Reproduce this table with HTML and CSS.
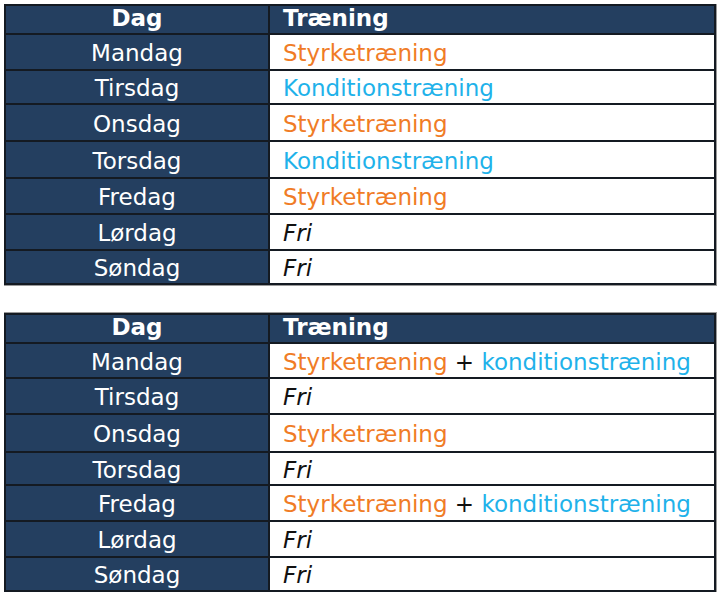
FILE: index.html
```html
<!DOCTYPE html>
<html lang="da">
<head>
<meta charset="utf-8">
<link rel="stylesheet" href="styles.css">
</head>
<body>
<table class="plan">
  <tr class="head"><th class="day">Dag</th><th class="act">Træning</th></tr>
  <tr class="r36"><td class="day">Mandag</td><td class="act"><span class="str">Styrketræning</span></td></tr>
  <tr class="r34"><td class="day">Tirsdag</td><td class="act"><span class="kon">Konditionstræning</span></td></tr>
  <tr class="r37"><td class="day">Onsdag</td><td class="act"><span class="str">Styrketræning</span></td></tr>
  <tr class="r37"><td class="day">Torsdag</td><td class="act"><span class="kon">Konditionstræning</span></td></tr>
  <tr class="r36"><td class="day">Fredag</td><td class="act"><span class="str">Styrketræning</span></td></tr>
  <tr class="r36"><td class="day">Lørdag</td><td class="act"><span class="fri">Fri</span></td></tr>
  <tr class="r34"><td class="day">Søndag</td><td class="act"><span class="fri">Fri</span></td></tr>
</table>

<table class="plan second">
  <tr class="head"><th class="day">Dag</th><th class="act">Træning</th></tr>
  <tr class="r35"><td class="day">Mandag</td><td class="act"><span class="str">Styrketræning</span> + <span class="kon">konditionstræning</span></td></tr>
  <tr class="r36"><td class="day">Tirsdag</td><td class="act"><span class="fri">Fri</span></td></tr>
  <tr class="r38"><td class="day">Onsdag</td><td class="act"><span class="str">Styrketræning</span></td></tr>
  <tr class="r33"><td class="day">Torsdag</td><td class="act"><span class="fri">Fri</span></td></tr>
  <tr class="r36"><td class="day">Fredag</td><td class="act"><span class="str">Styrketræning</span> + <span class="kon">konditionstræning</span></td></tr>
  <tr class="r36"><td class="day">Lørdag</td><td class="act"><span class="fri">Fri</span></td></tr>
  <tr class="r34"><td class="day">Søndag</td><td class="act"><span class="fri">Fri</span></td></tr>
</table>
</body>
</html>
```

FILE: styles.css
```css
html, body {
  background: #ffffff;
}
body {
  margin: 4px 0 0 4px;
  font-family: "DejaVu Sans", Verdana, sans-serif;
  font-size: 23px;
  color: #111111;
}
.plan {
  width: 712px;
  border-collapse: collapse;
  border: 2px solid #1a1a1a;
  box-shadow: 0 0 0 1px #9a9a9a;
  table-layout: fixed;
}
.second {
  margin-top: 28px;
}
.plan th, .plan td {
  border: 2px solid #141a22;
  padding: 3px 0 0 0;
  line-height: 1;
}
.plan .day {
  width: 262px;
  background: #243f60;
  color: #ffffff;
  text-align: center;
}
.plan .act {
  background: #ffffff;
  text-align: left;
  padding-left: 13px;
  white-space: nowrap;
}
.plan .head th {
  height: 25px;
  font-weight: bold;
  background: #243f60;
  color: #ffffff;
  padding-top: 0;
  padding-bottom: 2px;
}
.r33 td { height: 28px; }
.r34 td { height: 29px; }
.r35 td { height: 30px; }
.r36 td { height: 31px; }
.r37 td { height: 32px; }
.r38 td { height: 33px; }
.str { color: #f07c26; }
.kon { color: #1fb2ea; }
.fri { font-style: italic; color: #111111; }
```
